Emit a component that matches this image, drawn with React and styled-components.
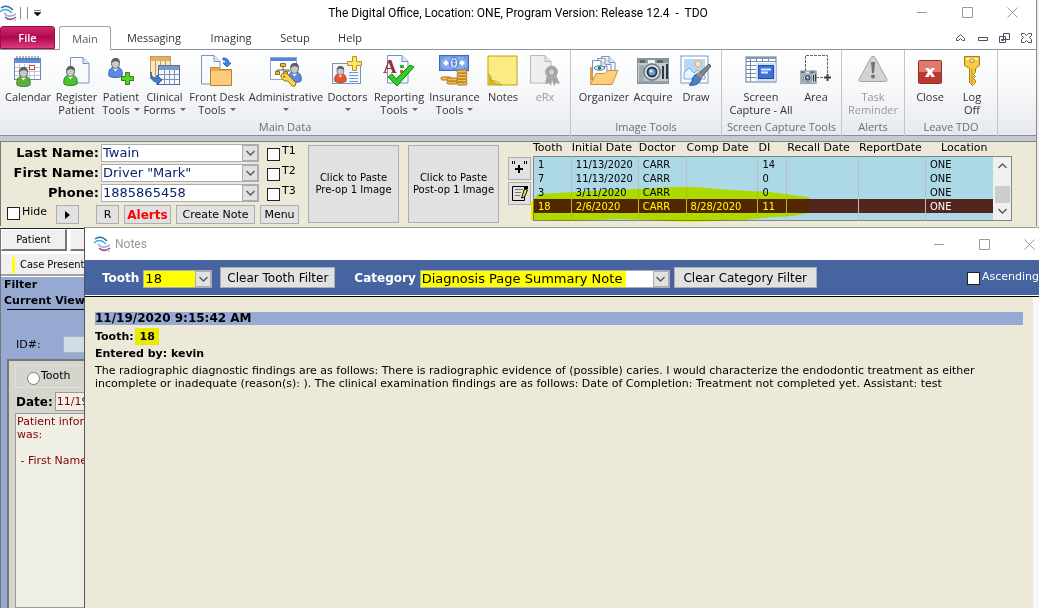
import React from "react";
import styled, { createGlobalStyle } from "styled-components";

const uiFont = `"Open Sans", "Noto Sans", sans-serif`;
const titleFont = `Roboto, "Open Sans", sans-serif`;
const formFont = `"DejaVu Sans", sans-serif`;
const tabFont = `"DejaVu Sans Condensed", "DejaVu Sans", sans-serif`;

/* ---------- icons ---------- */

const Person = ({ x = 0, y = 0, color = "#5fae3c", dark = "#3f7f28" }) => (
  <g transform={`translate(${x} ${y})`}>
    <path d="M1 18c-1-5 1-8 4.500-9h4c3.500 1 5.500 4 4.500 9-3 2-10 2-13 0z" fill={color} stroke={dark} />
    <path d="M5 10l2.500 3.500L10 10z" fill="#fff" />
    <ellipse cx="7.500" cy="5.500" rx="4" ry="5" fill="#c9c9c9" stroke="#666" />
    <path d="M3.500 5C3 1 6 0 8 0s4.500 2 3.500 5C10 3 6 2.500 3.500 5z" fill="#5e5e5e" />
  </g>
);

const Page = ({ x = 0, y = 0, w = 18, h = 26, fill = "#f7faff", stroke = "#7d93b5" }) => (
  <g transform={`translate(${x} ${y})`} fill={fill} stroke={stroke}>
    <path d={`M.5 .5H${w - 6}L${w} 6.500V${h}H.5z`} />
    <path d={`M${w - 6} .5V6.500H${w}`} fill="#dbe6f5" />
  </g>
);

const Camera = () => (
  <g>
    <rect x=".5" y="3.500" width="31" height="25" fill="#c3ccd2" stroke="#8a949b" />
    <path d="M1 4h30v4H1z" fill="#8d979e" />
    <path d="M3 5h5v3H3zM20 5h6v3h-6z" fill="#5b666e" />
    <path d="M11 5h7v4h-7z" fill="#eef3f5" />
    <path d="M2 10h5v16H2z" fill="#a0abb2" />
    <path d="M25 11h2v13h-2zM29 9h2v15h-2z" fill="#31383d" />
    <path d="M1 26h30v2H1z" fill="#97a1a7" />
    <circle cx="15" cy="17" r="8" fill="#eef1f3" stroke="#7b858c" strokeWidth="2" />
    <circle cx="15" cy="17" r="4.500" fill="#6f9dd0" stroke="#263745" strokeWidth="2" />
    <circle cx="14" cy="16" r="1.500" fill="#d9f2ff" />
  </g>
);

const Coins = ({ x, y, n }) => (
  <g fill="#f1bd4b" stroke="#a8741b">
    {Array.from({ length: n }, (_, i) => (
      <rect key={i} x={x} y={y - i * 3} width="10" height="3" rx="1.500" />
    ))}
  </g>
);

const icons = {
  calendar: (
    <>
      <rect x="2.500" y="3.500" width="26" height="21" fill="#fff" stroke="#7087ad" />
      <path d="M3 4h25v4H3z" fill="#5b8fe8" />
      <path d="M3 12.500h25M3 16.500h25M3 20.500h25M7.500 9v15M12.500 9v15M17.500 9v15M22.500 9v15" stroke="#b9c7dd" />
      <path d="M5 1v4M8 1v4M11 1v4M14 1v4M17 1v4M20 1v4M23 1v4M26 1v4" stroke="#5a6c8c" />
      <rect x="17.500" y="10.500" width="5" height="4" fill="#fff" stroke="#e2512b" />
      <Person x={4} y={12} />
    </>
  ),
  register: (
    <>
      <Page x={9} y={2} w={19} h={26} />
      <Person x={2} y={11} color="#47c531" dark="#2c841d" />
    </>
  ),
  patient: (
    <>
      <Person x={3} y={3} color="#5b8ae0" dark="#3a61ad" />
      <path d="M20.500 17.500h4v4h4v4h-4v4h-4v-4h-4v-4h4z" fill="#57cf2d" stroke="#2a8312" />
    </>
  ),
  forms: (
    <>
      <rect x="1.500" y="1.500" width="20" height="22" fill="#fbe7c1" stroke="#c99a4e" />
      <path d="M2 2h19v4H2z" fill="#dcb06a" />
      <path d="M6.500 6v17M11.500 6v17M16.500 6v17" stroke="#c99a4e" />
      <rect x="9.500" y="10.500" width="21" height="19" fill="#f3f7fd" stroke="#536f9d" />
      <path d="M10 11h20v4H10z" fill="#7797cd" />
      <path d="M10 19.500h20M10 24.500h20M15.500 11v18M20.500 11v18M25.500 11v18" stroke="#7d93b9" />
      <path d="M2 17c0 4 2 6 6 6v-3l5 5-5 5v-3c-5 0-7-5-6-10z" fill="#3e80d8" stroke="#265aa3" />
    </>
  ),
  frontdesk: (
    <>
      <Page x={0} y={0} w={19} h={29} />
      <path d="M9.500 30.500v-18h8l2 2h11v16z" fill="#e8a94a" stroke="#bf8229" />
      <path d="M10 16h20v14H10z" fill="#fbcd7b" />
      <path d="M22 3c4 0 6 2 6 5h2l-4 4-4-4h3c0-2-1-3-3-3z" fill="#3c8be6" stroke="#2566b6" />
    </>
  ),
  admin: (
    <>
      <rect x=".5" y="2.500" width="26" height="22" fill="#fff" stroke="#8ea6d0" />
      <path d="M1 3h25v3H1z" fill="#4f86e2" />
      <path d="M13 11v4M7 17v-2h12v2" stroke="#555" fill="none" />
      <path d="M10.500 8.500h5v3h-5zM5.500 16.500h4v3h-4zM13.500 16.500h4v3h-4z" fill="#f4bb43" stroke="#8d6a1f" />
      <Person x={17} y={8} color="#5b8ae0" dark="#3a61ad" />
      <path d="M11 20c2-3 7-2 8 1l7 7-1 3h-3l-4-5c-4 1-8-3-7-6z" fill="#f7d84b" stroke="#93761a" />
      <circle cx="14" cy="21.500" r="1" fill="#7a610f" />
    </>
  ),
  doctors: (
    <>
      <rect x=".5" y="8.500" width="28" height="20" fill="#f3f7fd" stroke="#7d93b5" />
      <g transform="translate(2 11) scale(.85)">
        <Person color="#e8552d" dark="#a83214" />
      </g>
      <path d="M17 17.500h9M17 20.500h9M17 23.500h9M17 26.500h9" stroke="#6f99d8" />
      <path d="M20.500 1.500h4v5h5v4h-5v5h-4v-5h-5v-4h5z" fill="#ffe56d" stroke="#ba931d" />
    </>
  ),
  reporting: (
    <>
      <Page x={4} y={0} w={21} h={28} />
      <text x="0" y="18" fontFamily="Liberation Serif, serif" fontWeight="700" fontSize="19" fill="#972d38">A</text>
      <path d="M17 10h4v3h-4z" fill="#3aad38" />
      <path d="M17 15h3v3h-3z" fill="#e2512b" />
      <path d="M5 22l4-3 4 5 14-14 4 2-17 19z" fill="#30ce29" stroke="#148312" />
    </>
  ),
  insurance: (
    <>
      <rect x=".5" y=".5" width="29" height="15" fill="#6c98e4" stroke="#3d66b8" />
      <path d="M2 4h3V2h20v2h3v8h-3v2H5v-2H2z" fill="#84abf0" />
      <path d="M7 5l3 3-3 3-3-3zM23 5l3 3-3 3-3-3z" fill="#fff" />
      <ellipse cx="15" cy="8" rx="4" ry="5.500" fill="#d9e7ff" stroke="#3d66b8" />
      <path d="M13 6h4M13 9h4M15 4v8" stroke="#3d66b8" />
      <Coins x={2} y={22} n={1} />
      <Coins x={8} y={26} n={2} />
      <Coins x={18} y={27} n={5} />
    </>
  ),
  notes: (
    <>
      <rect x="1" y="1" width="29" height="29" fill="#fbeb84" stroke="#bfa30f" />
      <path d="M1.500 19c2 6 5 9 13 11H1.500z" fill="#d4b820" />
      <path d="M1.500 19c3 2 3 4 2 7 5-1 8 1 11 4C8 29 3 26 1.500 19z" fill="#fff3a6" stroke="#bfa30f" />
    </>
  ),
  erx: (
    <>
      <Page x={1} y={0} w={21} h={28} fill="#f0eeef" stroke="#b9b9b9" />
      <path d="M18 20l-2 9 4-1 2 3 1-6 2 6 2-3 4 1-4-9z" fill="#a6a6a6" />
      <circle cx="22.500" cy="17" r="6.500" fill="#ababab" />
      <circle cx="22.500" cy="17" r="3.500" fill="#d0d0d0" stroke="#8d8d8d" />
    </>
  ),
  organizer: (
    <>
      <Page x={13} y={1} w={14} h={20} />
      <Page x={9} y={3} w={14} h={20} />
      <Page x={4} y={5} w={15} h={20} />
      <path d="M6 13c3-3 8-3 11 0-3 3-8 3-11 0z" fill="#e5f5f7" stroke="#397894" />
      <circle cx="11.500" cy="13" r="1.800" fill="#2f7040" />
      <path d="M2 29V12h2l1 10z" fill="#e0a140" />
      <path d="M2.500 29.500L8 18.500h9l3-3h10L24 29.500z" fill="#fbcf7b" stroke="#cf9134" />
    </>
  ),
  acquire: <Camera />,
  draw: (
    <>
      <rect x="1" y="1" width="27" height="27" fill="#fff" stroke="#7897c3" />
      <path d="M4 4h21v20H4z" fill="#b4d8fa" />
      <circle cx="18" cy="9" r="3" fill="#ffe9a1" stroke="#f0a56e" />
      <path d="M4 18l5-5 5 5 4-3 7 6v3H4z" fill="#e7f3ff" stroke="#79a8d8" />
      <path d="M29 9l2 2-10 12-4-3z" fill="#7d8790" stroke="#535b63" />
      <path d="M15 20l3-1 3 4c-1 6-6 8-12 7 4-2 2-7 6-10z" fill="#5080c6" stroke="#2d5799" />
      <path d="M16 19l5 4 1-2-4-4z" fill="#c98950" />
    </>
  ),
  screen: (
    <>
      <rect x="1" y="2" width="30" height="25" fill="#fff" stroke="#627997" />
      <path d="M1 6.500h30M1 10.500h30M1 14.500h30M1 18.500h30M1 22.500h30M5.500 2v25M11.500 2v5M17.500 2v5M23.500 2v5" stroke="#758caa" />
      <path d="M1 2h30v2H1z" fill="#8198b7" />
      <rect x="11" y="8" width="20" height="18" fill="#cfdef5" />
      <rect x="13.500" y="10.500" width="15" height="13" fill="#3f73dc" stroke="#244fa9" />
      <path d="M16 14.500h10M16 17.500h7" stroke="#dce9ff" strokeWidth="2" />
    </>
  ),
  area: (
    <>
      <path d="M5.500 16V.5h22V22M16 22.500h10" fill="none" stroke="#5e666c" strokeDasharray="3 1" />
      <path d="M24 22.500h7M27.500 19v7" stroke="#39434a" strokeWidth="2" />
      <g transform="translate(0 14) scale(.52)">
        <Camera />
      </g>
    </>
  ),
  task: (
    <>
      <path d="M14 2.500c1-1.500 3-1.500 4 0l12 22c.5 1-.5 2-1.500 2h-25c-1 0-2-1-1.500-2z" fill="#d3d3d3" stroke="#a3a3a3" />
      <path d="M14 7h4l-1 11h-2z" fill="#717171" />
      <circle cx="16" cy="21.500" r="2" fill="#717171" />
    </>
  ),
  close: (
    <>
      <rect x="4.500" y="5.500" width="23" height="23" rx="1" fill="#dd7a70" stroke="#97302c" />
      <path d="M5 17h22v11H5z" fill="#b93a30" />
      <path d="M11 13h3.500l1.500 2 1.500-2H21l-3 4 3 5h-3.500L16 19.500 14.500 22H11l3-5z" fill="#fff" />
    </>
  ),
  key: (
    <>
      <path d="M8.500 1.500h15v9l-4 3v4l-2 2 2 2-2 2 2 2v2l-3 3-3-3v-14l-5-3z" fill="#f6ca42" stroke="#a97c14" />
      <path d="M16 14v14" stroke="#b8881c" />
      <path d="M10 3h12v2H10z" fill="#fff0a5" />
      <rect x="14" y="4" width="4" height="3" rx="1" fill="#fff" stroke="#a97c14" />
    </>
  ),
};

const Icon = ({ name }) => (
  <svg width="32" height="32" viewBox="0 0 32 32" aria-hidden="true">
    {icons[name]}
  </svg>
);

const Logo = () => (
  <svg width="18" height="16" viewBox="0 0 18 16" fill="none" aria-hidden="true">
    <path d="M1 3c4-3 8-2 12 2" stroke="#2f6f9f" strokeWidth="1.500" />
    <path d="M0 7c4-4 8-3 12 1" stroke="#2db4dc" strokeWidth="1.500" />
    <path d="M4 8c3 4 7 4 12 1" stroke="#b8a3c8" strokeWidth="1.500" />
    <path d="M5 12c3 3 7 3 11 0" stroke="#7c5292" strokeWidth="1.500" />
    <path d="M14 15h2" stroke="#aaa" />
  </svg>
);

const Chevron = ({ up }) => (
  <svg width="9" height="6" viewBox="0 0 9 6" fill="none" aria-hidden="true">
    <path d={up ? "M.5 5l4-4 4 4" : "M.5 1l4 4 4-4"} stroke="#555" strokeWidth="1.300" />
  </svg>
);

const WindowButtons = () => (
  <Caption>
    <button aria-label="Minimize">
      <svg width="11" height="11"><path d="M0 5.500h10" stroke="#999" /></svg>
    </button>
    <button aria-label="Maximize">
      <svg width="11" height="11"><path d="M.5 .5h10v10H.5z" fill="none" stroke="#999" /></svg>
    </button>
    <button aria-label="Close">
      <svg width="11" height="11"><path d="M.5 .5l10 10M10.500 .5l-10 10" stroke="#999" /></svg>
    </button>
  </Caption>
);

/* ---------- data ---------- */

const ribbon = [
  {
    title: "Main Data",
    width: 571,
    pad: 2,
    items: [
      ["calendar", ["Calendar"], 52],
      ["register", ["Register", "Patient"], 45],
      ["patient", ["Patient", "Tools"], 44, true],
      ["forms", ["Clinical", "Forms"], 43, true],
      ["frontdesk", ["Front Desk", "Tools"], 62, true],
      ["admin", ["Administrative", ""], 76, true],
      ["doctors", ["Doctors", ""], 47, true],
      ["reporting", ["Reporting", "Tools"], 56, true],
      ["insurance", ["Insurance", "Tools"], 55, true],
      ["notes", ["Notes"], 42],
      ["erx", ["eRx"], 42, false, true],
    ],
  },
  {
    title: "Image Tools",
    width: 151,
    pad: 3,
    items: [
      ["organizer", ["Organizer"], 60],
      ["acquire", ["Acquire"], 38],
      ["draw", ["Draw"], 48],
    ],
  },
  {
    title: "Screen Capture Tools",
    width: 120,
    pad: 4,
    items: [
      ["screen", ["Screen", "Capture - All"], 70],
      ["area", ["Area"], 40],
    ],
  },
  { title: "Alerts", width: 63, pad: 1, items: [["task", ["Task", "Reminder"], 60, false, true]] },
  {
    title: "Leave TDO",
    width: 93,
    pad: 6,
    items: [
      ["close", ["Close"], 38],
      ["key", ["Log", "Off"], 46],
    ],
  },
];

const columns = [
  ["Tooth", 39],
  ["Initial Date", 67],
  ["Doctor", 48],
  ["Comp Date", 72],
  ["DI", 29],
  ["Recall Date", 72],
  ["ReportDate", 67],
  ["Location", 67],
];

const visits = [
  ["1", "11/13/2020", "CARR", "", "14", "", "", "ONE"],
  ["7", "11/13/2020", "CARR", "", "0", "", "", "ONE"],
  ["3", "3/11/2020", "CARR", "", "0", "", "", "ONE"],
  ["18", "2/6/2020", "CARR", "8/28/2020", "11", "", "", "ONE"],
];

const patientFields = [
  ["Last Name:", "Twain", "T1"],
  ["First Name:", 'Driver "Mark"', "T2"],
  ["Phone:", "1885865458", "T3"],
];

/* ---------- parts ---------- */

const ComboBox = ({ id, value, ...rest }) => (
  <Combo {...rest}>
    <select id={id} defaultValue={value}>
      <option>{value}</option>
    </select>
    <span>
      <Chevron />
    </span>
  </Combo>
);

const RibbonItem = ({ item }) => {
  const [icon, lines, width, menu, disabled] = item;
  return (
    <RibbonButton $width={width} disabled={disabled}>
      <Icon name={icon} />
      {lines.map((line, i) => (
        <span key={i}>
          {line}
          {menu && i === 1 && <Caret $gap={line ? 4 : 0} />}
        </span>
      ))}
    </RibbonButton>
  );
};

const PatientHeader = () => (
  <Header>
    <PatientForm>
      {patientFields.map(([label, value, flag], i) => (
        <FieldRow key={label}>
          <label htmlFor={`patient${i}`}>{label}</label>
          <ComboBox id={`patient${i}`} value={value} $size={13} $color="#0a246a" />
          <Check>
            <input type="checkbox" />
            {flag}
          </Check>
        </FieldRow>
      ))}
      <ActionRow>
        <Check>
          <input type="checkbox" />
          Hide
        </Check>
        <Button $width={23} aria-label="Next">
          <svg width="5" height="8"><path d="M0 0l5 4-5 4z" /></svg>
        </Button>
        <i />
        <Button $width={23}>R</Button>
        <Button $width={47} $alert>Alerts</Button>
        <Button $width={79}>Create Note</Button>
        <Button $width={39}>Menu</Button>
      </ActionRow>
    </PatientForm>
    <PasteButton>Click to Paste<br />Pre-op 1 Image</PasteButton>
    <PasteButton>Click to Paste<br />Post-op 1 Image</PasteButton>
    <SmallButtons>
      <button aria-label="Add">
        <svg width="20" height="20" stroke="#000">
          <path d="M2.500 2v3M4.500 2v3M14.500 2v3M16.500 2v3" />
          <path d="M5 10h8M9 6v8" strokeWidth="2" />
        </svg>
      </button>
      <button aria-label="Edit">
        <svg width="20" height="20" fill="none" stroke="#000">
          <path d="M15 2.500H2.500v14h12V9" />
          <path d="M5 5.500h8M5 8.500h6M5 11.500h5" stroke="#777" />
          <path d="M11.500 14l3-9 3 1-3 7z" fill="#f5ef31" />
          <path d="M14 3.500h4" strokeWidth="3" />
        </svg>
      </button>
    </SmallButtons>
    <Visits>
      <VisitTable>
        <colgroup>
          {columns.map(([name, width]) => (
            <Col key={name} $width={width} />
          ))}
        </colgroup>
        <thead>
          <tr>{columns.map(([name]) => <th key={name}>{name}</th>)}</tr>
        </thead>
        <tbody>
          {visits.map((row) => (
            <VisitRow key={row[0]} $selected={row[0] === "18"}>
              {row.map((cell, i) => <td key={i}>{cell}</td>)}
            </VisitRow>
          ))}
          <FillerRow>{columns.map(([name]) => <td key={name} />)}</FillerRow>
        </tbody>
      </VisitTable>
      <ScrollBar>
        <Chevron up />
        <i />
        <Chevron />
      </ScrollBar>
      <Marker width="280" height="36" viewBox="0 0 280 36">
        <path
          d="M1 16L8 7 45 5 75 3 110 2 140 0 165 0 200 3 240 5 262 8 279 10 279 26 262 29 232 31 215 33 158 35 90 32 40 34 1 33z"
          fill="#ff0"
        />
      </Marker>
    </Visits>
  </Header>
);

const SidePanel = () => (
  <Side>
    <TabLine>
      <SideTab $width={66}>Patient</SideTab>
      <SideTab $width={40} aria-label="More" />
    </TabLine>
    <CaseTab>Case Present</CaseTab>
    <FilterPanel>
      <h2>Filter</h2>
      <h2>Current View</h2>
      <hr />
      <IdLine>
        <label htmlFor="idNumber">ID#:</label>
        <input id="idNumber" />
      </IdLine>
      <NoteBox>
        <RadioLine>
          <input type="radio" />
          Tooth
        </RadioLine>
        <DateLine>
          <label htmlFor="noteDate">Date:</label>
          <input id="noteDate" defaultValue="11/19/2020" />
        </DateLine>
        <textarea aria-label="Note" defaultValue={"Patient information\nwas:\n\n - First Name"} />
      </NoteBox>
    </FilterPanel>
  </Side>
);

const NotesWindow = () => (
  <Notes>
    <NotesTitle>
      <Logo />
      <h2>Notes</h2>
      <WindowButtons />
    </NotesTitle>
    <FilterBar>
      <label htmlFor="toothFilter">Tooth</label>
      <ComboBox id="toothFilter" value="18" $width={69} $size={13} $mark={56} />
      <Button $tall $width={115}>Clear Tooth Filter</Button>
      <label htmlFor="categoryFilter">Category</label>
      <ComboBox
        id="categoryFilter"
        value="Diagnosis Page Summary Note"
        $width={250}
        $size={13}
        $mark={205}
      />
      <Button $tall $width={143}>Clear Category Filter</Button>
      <Check>
        <input type="checkbox" />
        Ascending
      </Check>
    </FilterBar>
    <NoteArea>
      <Note>
        <h3>11/19/2020 9:15:42 AM</h3>
        <strong>
          Tooth: <mark>18</mark>
        </strong>
        <strong>Entered by: kevin</strong>
        <p>
          The radiographic diagnostic findings are as follows: There is radiographic evidence of
          (possible) caries. I would characterize the endodontic treatment as either incomplete or
          inadequate (reason(s): ). The clinical examination findings are as follows: Date of
          Completion: Treatment not completed yet. Assistant: test
        </p>
      </Note>
      <NoteScroll />
    </NoteArea>
  </Notes>
);

const App = () => (
  <Window>
    <GlobalStyle />
    <Frame>
      <TitleBar>
        <QuickAccess>
          <Logo />
          <i />
          <i />
          <svg width="7" height="6"><path d="M0 .5h7M0 2.500h7L3.500 6z" stroke="#000" strokeWidth=".5" /></svg>
        </QuickAccess>
        <h1>The Digital Office, Location: ONE, Program Version: Release 12.4&nbsp; -&nbsp; TDO</h1>
        <WindowButtons />
      </TitleBar>
      <MenuBar>
        <FileTab>File</FileTab>
        <MainTab>Main</MainTab>
        <MenuTab $width={86}>Messaging</MenuTab>
        <MenuTab $width={68}>Imaging</MenuTab>
        <MenuTab $width={60}>Setup</MenuTab>
        <MenuTab $width={50}>Help</MenuTab>
        <svg width="80" height="12" fill="none" stroke="#44505c">
          <path d="M3.500 8.500h2l2-2 2 2h2v-2l-4-4-4 4zM25.500 5.500h9v3h-9z" />
          <path d="M50.500 1.500h6v6h-6zM46.500 4.500h6v6h-6zM48.500 7.500h2v1h-2z" />
          <path d="M68.500 1.500h3l2 2 2-2h3v2l-2 2 2 2v3h-3l-2-2-2 2h-3v-3l2-2-2-2z" />
        </svg>
      </MenuBar>
      <Ribbon>
        {ribbon.map((group) => (
          <RibbonGroup key={group.title} $width={group.width} $pad={group.pad}>
            <div>
              {group.items.map((item) => (
                <RibbonItem key={item[0]} item={item} />
              ))}
            </div>
            <h2>{group.title}</h2>
          </RibbonGroup>
        ))}
      </Ribbon>
      <PatientHeader />
    </Frame>
    <Workspace>
      <SidePanel />
      <NotesWindow />
    </Workspace>
  </Window>
);

/* ---------- styles ---------- */

const GlobalStyle = createGlobalStyle`
  * {
    box-sizing: border-box;
  }
  body {
    margin: 0;
    overflow: hidden;
    background: #ece9d8;
    font: 11px/14px ${formFont};
    color: #000;
  }
  h1, h2, h3, p {
    margin: 0;
    font-size: inherit;
  }
  button, input, select, textarea {
    font: inherit;
    color: inherit;
    margin: 0;
    padding: 0;
    border: 0;
    border-radius: 0;
    background: none;
  }
  svg {
    display: block;
    flex: none;
  }
`;

const Window = styled.div`
  min-height: 100vh;
  display: flex;
  flex-direction: column;
`;

const Frame = styled.div`
  border-right: 1px solid #888;
  box-shadow: 2px 0 #f0f0f0;
  margin-right: 2px;
`;

const TitleBar = styled.header`
  display: grid;
  grid-template-columns: 1fr auto 1fr;
  align-items: center;
  height: 26px;
  padding-bottom: 1px;
  background: #fff;

  h1 {
    font: 12px/16px ${titleFont};
    white-space: nowrap;
  }
`;

const QuickAccess = styled.div`
  display: flex;
  align-items: center;
  gap: 6px;

  svg:first-child {
    margin-right: -4px;
  }
  i {
    height: 12px;
    border-left: 1px solid #888;
  }
`;

const Caption = styled.div`
  display: flex;
  justify-content: flex-end;
  gap: 34px;
  margin-left: auto;
  padding-right: 18px;
`;

const MenuBar = styled.nav`
  display: flex;
  align-items: stretch;
  height: 24px;
  background: #fff;
  border-bottom: 1px solid #8a949e;
  font-family: ${uiFont};
  font-size: 12px;

  > svg {
    margin: 6px 3px 0 auto;
  }
`;

const MenuTab = styled.button`
  width: ${(p) => p.$width}px;
  font-size: 11px;
  color: #333;
`;

const FileTab = styled(MenuTab)`
  width: 55px;
  color: #fff;
  font-weight: 600;
  border: 1px solid #970f45;
  border-radius: 3px 3px 0 0;
  background: linear-gradient(#cc2c68, #b00850 50%, #dc3d7f);
`;

const MainTab = styled(MenuTab)`
  width: 52px;
  margin: 0 0 -1px 4px;
  color: #555c66;
  background: #fff;
  border: 1px solid #9aa2aa;
  border-bottom: 0;
  border-radius: 3px 3px 0 0;
`;

const Ribbon = styled.div`
  display: flex;
  height: 91px;
  background: linear-gradient(#fff, #f6f7f9 50%, #e6e9ed);
  border-bottom: 5px solid #c6c9cf;
  box-shadow: inset 0 -1px #8a9098;
  font-family: ${uiFont};
`;

const RibbonGroup = styled.section`
  display: flex;
  flex-direction: column;
  justify-content: space-between;
  width: ${(p) => p.$width}px;
  padding-top: 5px;
  border-right: 1px solid #c3c7cd;

  div {
    display: flex;
    padding-left: ${(p) => p.$pad}px;
  }
  h2 {
    padding-bottom: 2px;
    font-size: 11px;
    font-weight: 400;
    text-align: center;
    white-space: nowrap;
    color: #696e7a;
  }
`;

const RibbonButton = styled.button`
  display: flex;
  flex-direction: column;
  align-items: center;
  width: ${(p) => p.$width}px;
  font-size: 11px;
  line-height: 13px;
  color: ${(p) => (p.disabled ? "#999" : "#333")};

  svg {
    margin-bottom: 3px;
  }
  span {
    display: flex;
    align-items: center;
    min-height: 13px;
    white-space: nowrap;
  }
`;

const Caret = styled.i`
  margin-left: ${(p) => p.$gap}px;
  border: 3px solid transparent;
  border-top-color: #666;
  border-bottom: 0;
`;

const Header = styled.section`
  display: flex;
  height: 85px;
  padding-right: 24px;
  border-left: 1px solid #777;
  background: #ece9d8;
  box-shadow: inset 0 1px #808080;
`;

const PatientForm = styled.div`
  display: flex;
  flex-direction: column;
  gap: 3px;
  width: 298px;
  padding-top: 3px;
`;

const FieldRow = styled.div`
  display: grid;
  grid-template-columns: 98px 158px 1fr;
  gap: 2px;
  align-items: center;
  height: 17px;

  > label:first-child {
    font-size: 13px;
    font-weight: 700;
    text-align: right;
    white-space: nowrap;
  }
  > label:last-child {
    align-self: start;
    padding-left: 6px;
  }
  > label:last-child input {
    margin-top: 4px;
  }
`;

const Combo = styled.span`
  display: flex;
  flex: none;
  width: ${(p) => (p.$width ? `${p.$width}px` : "auto")};
  height: 18px;
  border: 1px solid #abadb3;
  background: ${(p) =>
    p.$mark ? `linear-gradient(90deg, #ff0 ${p.$mark}px, #fff ${p.$mark}px)` : "#fff"};
  color: ${(p) => p.$color || "#000"};

  select {
    flex: 1;
    min-width: 0;
    padding-left: 1px;
    appearance: none;
    font-size: ${(p) => p.$size}px;
    line-height: 16px;
  }
  > span {
    display: grid;
    place-items: center;
    width: 16px;
    border: 1px solid #abadb3;
    background: #e1e1e1;
  }
`;

const Check = styled.label`
  display: flex;
  align-items: flex-start;
  gap: 2px;
  white-space: nowrap;

  input {
    appearance: none;
    flex: none;
    width: 13px;
    height: 13px;
    margin-top: 2px;
    border: 1px solid #222;
    background: #fff;
  }
`;

const Button = styled.button`
  display: grid;
  place-items: center;
  flex: none;
  width: ${(p) => p.$width}px;
  height: ${(p) => (p.$tall ? 21 : 19)}px;
  border: 1px solid #adadad;
  background: #e1e1e1;
  white-space: nowrap;
  color: ${(p) => (p.$alert ? "#f00" : "#000")};
  font-weight: ${(p) => (p.$alert ? 700 : 400)};
  font-size: ${(p) => (p.$alert || p.$tall ? 12 : 11)}px;
`;

const ActionRow = styled.div`
  display: flex;
  gap: 5px;
  padding-top: 1px;
  padding-left: 6px;

  label {
    width: 44px;
  }
  i {
    width: 7px;
  }
`;

const PasteButton = styled.button`
  width: 91px;
  height: 78px;
  margin: 4px 0 0 9px;
  border: 1px solid #adadad;
  background: #e1e1e1;
  font-size: 10px;
  line-height: 12px;
  white-space: nowrap;
`;

const SmallButtons = styled.div`
  display: flex;
  flex-direction: column;
  gap: 2px;
  margin: 16px 2px 0 9px;

  button {
    display: grid;
    place-items: center;
    width: 23px;
    height: 23px;
    border: 1px solid #adadad;
    background: #e1e1e1;
  }
`;

const Visits = styled.div`
  position: relative;
  display: flex;
  flex: 1;
`;

const VisitTable = styled.table`
  flex: 1;
  height: 80px;
  border-collapse: separate;
  border-spacing: 0;
  table-layout: fixed;

  th {
    height: 15px;
    padding: 0;
    font-weight: 400;
    text-align: left;
    vertical-align: top;
    line-height: 13px;
    white-space: nowrap;
  }
  th:last-child {
    padding-left: 15px;
  }
  tbody {
    font-family: ${tabFont};
  }
  td {
    padding: 1px 0 0 4px;
    border-right: 1px solid #b9bfc4;
  }
  td:first-child {
    border-left: 1px solid #7f858c;
  }
  td:last-child {
    border-right: 0;
  }
  tbody tr:first-child td {
    border-top: 1px solid #7f858c;
  }
  tbody tr:last-child td {
    border-bottom: 1px solid #7f858c;
  }
`;

const Col = styled.col`
  width: ${(p) => p.$width}px;
`;

const VisitRow = styled.tr`
  height: 14px;
  line-height: 13px;
  background: ${(p) => (p.$selected ? "#52261d" : "#add8e6")};
  color: ${(p) => (p.$selected ? "#fff" : "#000")};
`;

const FillerRow = styled.tr`
  height: 8px;
  background: #add8e6;
`;

const ScrollBar = styled.div`
  display: flex;
  flex-direction: column;
  align-items: center;
  justify-content: space-between;
  width: 19px;
  height: 65px;
  margin-top: 15px;
  padding: 6px 0;
  border: 1px solid #7f858c;
  border-left: 0;
  background: #f0f0f0;

  i {
    width: 15px;
    height: 17px;
    margin-top: 12px;
    background: #cdcdcd;
  }
`;

/* highlighter stroke lying over the table */
const Marker = styled.svg`
  position: absolute;
  left: -3px;
  top: 46px;
  mix-blend-mode: multiply;
  pointer-events: none;
`;

const Workspace = styled.main`
  display: grid;
  grid-template-columns: 84px 1fr;
  flex: 1;
`;

const Side = styled.aside`
  display: flex;
  flex-direction: column;
  margin-top: 2px;
  overflow: hidden;
  border-left: 1px solid #777;
  border-top: 1px solid #222;
  background: #fff;
`;

const TabLine = styled.div`
  display: flex;
  gap: 3px;
  height: 25px;
`;

const SideTab = styled.button`
  flex: none;
  width: ${(p) => p.$width}px;
  height: 22px;
  border: 1px solid #fff;
  border-right: 2px solid #777;
  border-bottom: 2px solid #777;
  background: #f0f0f0;
  font-family: ${tabFont};
`;

const CaseTab = styled.button`
  display: flex;
  align-items: center;
  height: 22px;
  padding-top: 1px;
  border-bottom: 2px solid #a0a0a0;
  background: #f0f0f0;
  font-family: ${tabFont};
  white-space: nowrap;

  &::before {
    content: "";
    flex: none;
    width: 3px;
    height: 16px;
    margin: 0 5px 0 11px;
    background: #ff0;
  }
`;

const FilterPanel = styled.div`
  display: flex;
  flex-direction: column;
  flex: 1;
  margin-top: 1px;
  background: #96a9d3;

  h2 {
    padding-left: 3px;
    font-size: 11px;
    line-height: 16px;
    white-space: nowrap;
  }
  hr {
    width: 100%;
    margin: 0 0 0 6px;
    border: 0;
    border-top: 1px solid #000;
  }
`;

const IdLine = styled.div`
  display: flex;
  align-items: center;
  gap: 22px;
  padding: 26px 0 6px 15px;

  input {
    width: 60px;
    height: 17px;
    border: 1px solid #aab4c4;
    background: #d1dce6;
  }
`;

const NoteBox = styled.div`
  display: flex;
  flex-direction: column;
  flex: 1;
  width: 200px;
  margin-left: 6px;
  padding: 4px 7px 0 6px;
  border-left: 2px solid #777;
  border-top: 2px solid #777;
  background: #d5d5cd;

  textarea {
    flex: 1;
    padding: 1px;
    border: 1px solid #999;
    background: #f0efe6;
    color: #800000;
    line-height: 13px;
    resize: none;
  }
`;

const RadioLine = styled.label`
  display: flex;
  align-items: flex-start;
  gap: 1px;
  height: 23px;
  padding: 3px 0 0 11px;
  border: 1px solid #e0e0dc;

  input {
    width: 13px;
    height: 13px;
    margin-top: 3px;
  }
`;

const DateLine = styled.div`
  display: flex;
  align-items: center;
  gap: 2px;
  padding: 4px 0 2px 1px;

  label {
    font-size: 12px;
    font-weight: 700;
  }
  input {
    width: 90px;
    height: 19px;
    padding-left: 1px;
    border: 1px solid #999;
    background: #f0efe6;
    color: #800000;
  }
`;

const Notes = styled.section`
  display: flex;
  flex-direction: column;
  margin-top: 1px;
  min-width: 0;
  border-left: 1px solid #555;
  border-top: 1px solid #999;
  background: #ece9d8;
`;

const NotesTitle = styled.header`
  display: flex;
  align-items: center;
  height: 32px;
  padding-left: 9px;
  background: #fff;

  h2 {
    padding-left: 3px;
    font: 12px/16px ${titleFont};
    color: #999;
  }
  > div {
    padding-right: 4px;
  }
`;

const FilterBar = styled.div`
  display: flex;
  align-items: center;
  height: 36px;
  padding-left: 17px;
  background: #4664a0;
  border-bottom: 1px solid #fff;

  > label {
    padding-right: 4px;
    font-size: 12px;
    font-weight: 700;
    color: #fff;
  }
  > span {
    margin-top: 3px;
  }
  > button {
    margin-left: 8px;
  }
  > button + label {
    padding-left: 19px;
  }
  > span + button:nth-last-child(2) {
    margin-left: 4px;
  }
  > label:last-child {
    margin-left: auto;
    padding: 0;
    font-size: 11px;
    font-weight: 400;
  }
`;

const NoteArea = styled.div`
  display: flex;
  flex: 1;
  border-top: 1px solid #000;
`;

const Note = styled.article`
  display: flex;
  flex-direction: column;
  flex: 1;
  padding: 15px 10px 0;

  h3 {
    font-size: 12px;
    line-height: 13px;
    background: #96a9d3;
  }
  strong {
    font-size: 11px;
    line-height: 17px;
  }
  h3 + strong {
    margin-top: 3px;
  }
  mark {
    padding: 2px 4px;
    margin-left: -2px;
    background: #ece900;
  }
  p {
    line-height: 13px;
    padding-top: 2px;
  }
`;

const NoteScroll = styled.div`
  width: 6px;
  background: #f8f8f8;
`;

export default App;
